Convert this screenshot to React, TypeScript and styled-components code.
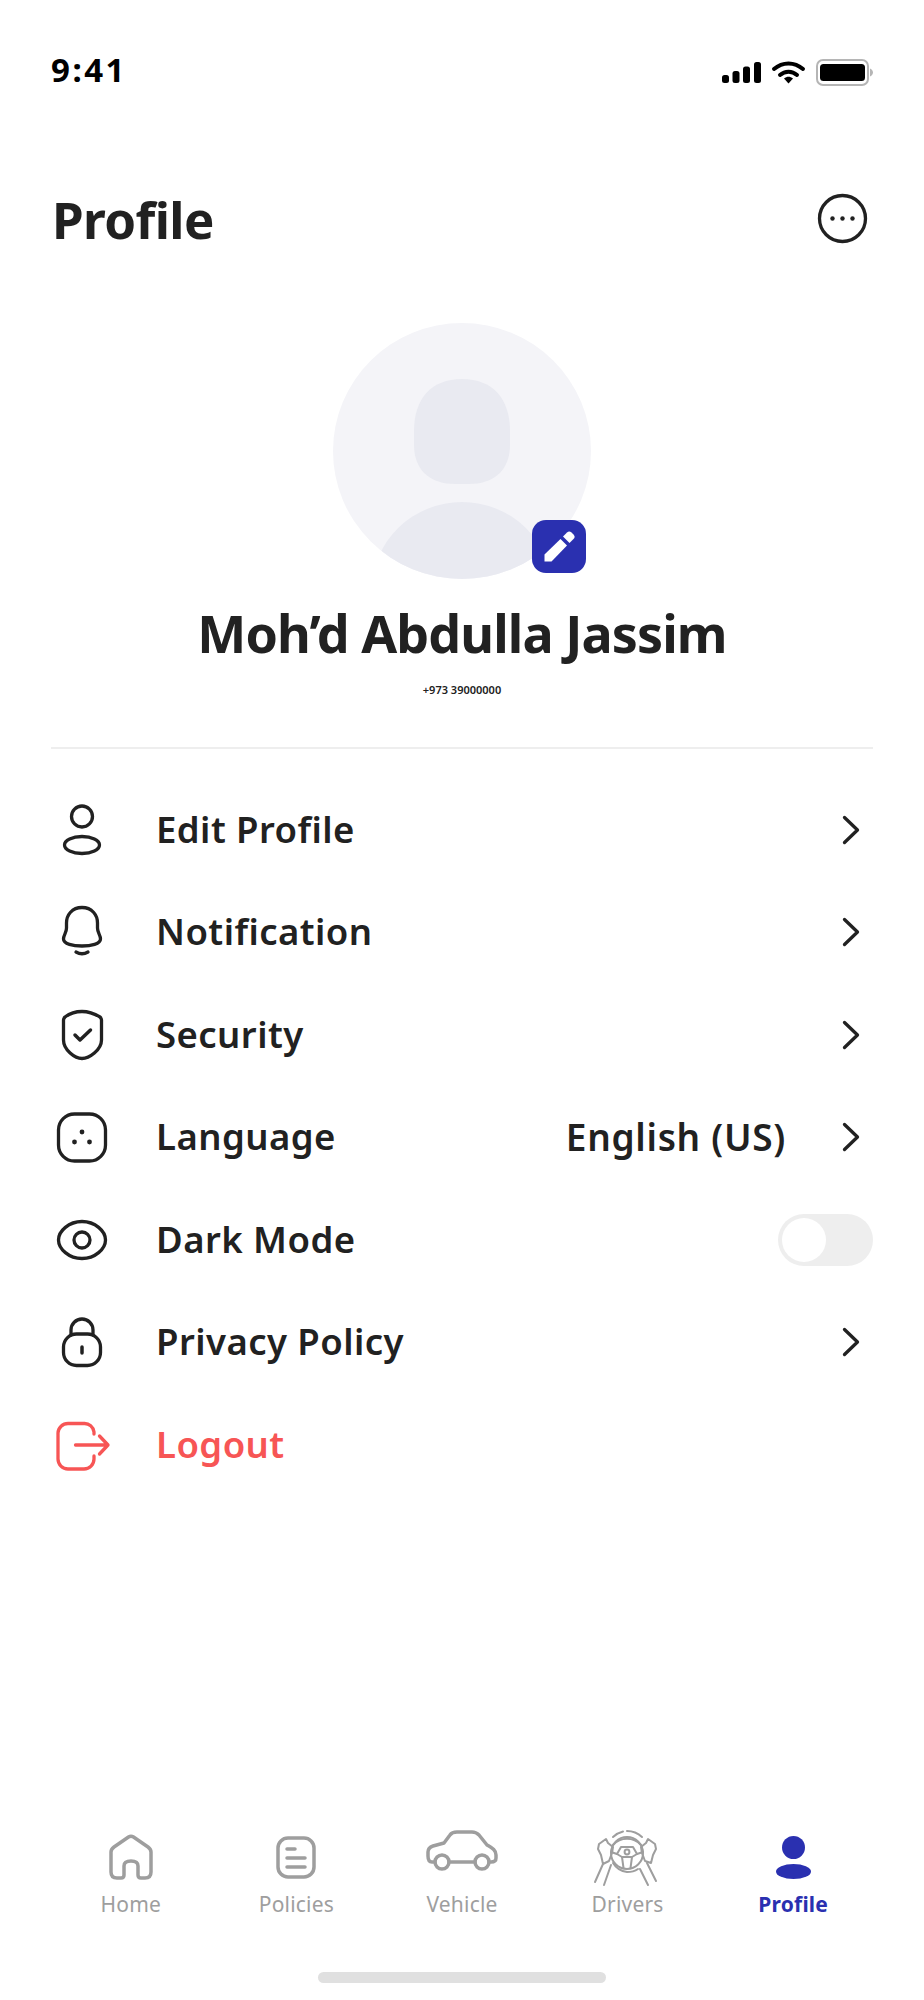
import React from 'react'
import styled, { createGlobalStyle } from 'styled-components'

const GlobalStyle = createGlobalStyle`
  html, body {
    margin: 0;
    padding: 0;
    background: #fff;
  }
  * {
    box-sizing: border-box;
  }
`

const INK = '#212121'
const BLUE = '#2a30b0'
const GREY = '#9e9e9e'
const RED = '#f75555'
const FONT = `'Noto Sans', 'Open Sans', sans-serif`

const Page = styled.div`
  width: 924px;
  height: 2000px;
  display: flex;
  flex-direction: column;
  background: #fff;
  font-family: ${FONT};
  color: ${INK};
  overflow: hidden;
`

const StatusBar = styled.div`
  height: 142px;
  padding: 0 51px;
  display: flex;
  align-items: center;
  justify-content: space-between;
`

const Time = styled.span`
  padding-bottom: 4px;
  font-size: 33px;
  font-weight: 700;
  letter-spacing: 2.5px;
  color: #000;
`

const StatusIcons = styled.div`
  margin-top: 2px;
  display: flex;
  align-items: center;
  gap: 11px;
`

const Header = styled.div`
  height: 153px;
  padding: 0 57px 0 52px;
  display: flex;
  align-items: center;
  justify-content: space-between;
`

const Title = styled.h1`
  margin: 0;
  font-size: 51px;
  font-weight: 700;
  letter-spacing: -0.6px;
`

const ProfileBlock = styled.div`
  padding-top: 28px;
  display: flex;
  flex-direction: column;
  align-items: center;
`

const AvatarWrap = styled.div`
  position: relative;
  width: 258px;
  height: 256px;
`

const EditBadge = styled.div`
  position: absolute;
  left: 199px;
  top: 197px;
  width: 54px;
  height: 53px;
  border-radius: 14px;
  background: ${BLUE};
  display: flex;
  align-items: center;
  justify-content: center;
`

const Name = styled.div`
  margin-top: 19px;
  font-size: 52px;
  line-height: 70px;
  font-weight: 700;
  letter-spacing: -0.9px;
  white-space: nowrap;
`

const Phone = styled.div`
  margin-top: 14px;
  font-size: 11px;
  line-height: 16px;
  font-weight: 600;
`

const Divider = styled.hr`
  margin: 49px 51px 0;
  border: 0;
  height: 2px;
  background: #eeeeee;
`

const Menu = styled.div`
  margin-top: 29.5px;
  padding: 0 51px;
  display: flex;
  flex-direction: column;
`

const Row = styled.div`
  height: 102.5px;
  display: flex;
  align-items: center;
`

const IconSlot = styled.div`
  width: 62px;
  margin-right: 43px;
  display: flex;
  justify-content: center;
  flex-shrink: 0;
`

const RowLabel = styled.span<{ $danger?: boolean }>`
  flex: 1;
  padding-bottom: 2px;
  font-size: 36.5px;
  font-weight: 600;
  letter-spacing: 0.45px;
  color: ${({ $danger }) => ($danger ? RED : INK)};
`

const RowValue = styled.span`
  padding-bottom: 2px;
  font-size: 37px;
  font-weight: 600;
  letter-spacing: 0.7px;
  margin-right: 43px;
`

const ChevronSlot = styled.div`
  width: 30px;
  margin-right: 14px;
  display: flex;
  justify-content: flex-end;
`

const Toggle = styled.div`
  width: 95px;
  height: 52px;
  border-radius: 26px;
  background: #eeeeee;
  padding: 4px;
  display: flex;
`

const Knob = styled.div`
  width: 44px;
  height: 44px;
  border-radius: 50%;
  background: #fff;
`

const Nav = styled.nav`
  margin-top: auto;
  padding: 0 48px;
  display: grid;
  grid-template-columns: repeat(5, 1fr);
`

const NavItem = styled.div`
  display: flex;
  flex-direction: column;
  align-items: center;
`

const NavIconBox = styled.div`
  height: 54px;
  display: flex;
  align-items: center;
  justify-content: center;
`

const NavLabel = styled.span<{ $active?: boolean }>`
  margin-top: 5px;
  font-size: 21px;
  line-height: 30px;
  letter-spacing: 0.2px;
  font-weight: ${({ $active }) => ($active ? 700 : 400)};
  color: ${({ $active }) => ($active ? BLUE : GREY)};
`

const HomeBar = styled.div`
  width: 288px;
  height: 11px;
  margin: 53px auto 17px;
  border-radius: 6px;
  background: #e0e0e0;
`

const Line = styled.svg.attrs({
  fill: 'none',
  strokeLinecap: 'round',
  strokeLinejoin: 'round',
})`
  display: block;
  overflow: visible;
  flex-shrink: 0;
`

const SignalIcon = () => (
  <svg width="39" height="21" viewBox="0 0 39 21" fill="#000">
    <rect x="0" y="13" width="7" height="8" rx="2.5" />
    <rect x="10.5" y="9" width="7" height="12" rx="2.5" />
    <rect x="21" y="4.5" width="7" height="16.5" rx="2.5" />
    <rect x="32" y="0" width="7" height="21" rx="2.5" />
  </svg>
)

const WifiIcon = () => (
  <Line width="33" height="23" viewBox="0 0 33 23">
    <path d="M2 8C10.5 0.5 22.5 0.5 31 8" stroke="#000" strokeWidth="4" />
    <path d="M8 14C13 9.5 20 9.5 25 14" stroke="#000" strokeWidth="4" />
    <path d="M12 17.5L16.5 22.5L21 17.5C18 15.2 15 15.2 12 17.5Z" fill="#000" />
  </Line>
)

const BatteryIcon = () => (
  <svg width="57" height="27" viewBox="0 0 57 27" fill="none">
    <rect x="1" y="1" width="51" height="25" rx="6" stroke="#b5b5b5" strokeWidth="2" />
    <rect x="4" y="5" width="45" height="17" rx="3.5" fill="#000" />
    <path d="M54 9.5C56 10.5 57 12 57 13.5C57 15 56 16.5 54 17.5Z" fill="#b5b5b5" />
  </svg>
)

const MoreIcon = () => (
  <Line width="49" height="49" viewBox="0 0 49 49">
    <circle cx="24.5" cy="24.5" r="23" stroke={INK} strokeWidth="3.3" />
    <circle cx="14.5" cy="24.5" r="2.2" fill={INK} />
    <circle cx="24.5" cy="24.5" r="2.2" fill={INK} />
    <circle cx="34.5" cy="24.5" r="2.2" fill={INK} />
  </Line>
)

const AvatarArt = () => (
  <svg width="258" height="256" viewBox="0 0 258 256">
    <defs>
      <clipPath id="avatar-clip">
        <ellipse cx="129" cy="128" rx="129" ry="128" />
      </clipPath>
    </defs>
    <ellipse cx="129" cy="128" rx="129" ry="128" fill="#f4f4f8" />
    <path
      d="M129 56C160 56 177 76 177 108V122C177 148 160 161 136 161H122C98 161 81 148 81 122V108C81 76 98 56 129 56Z"
      fill="#e9eaf1"
    />
    <g clipPath="url(#avatar-clip)">
      <ellipse cx="129" cy="267" rx="90" ry="88" fill="#e9eaf1" />
    </g>
  </svg>
)

const PencilIcon = () => (
  <svg width="31" height="31" viewBox="0 0 31 31" fill="#fff">
    <path d="M0.5 23.5V30.5H7.5L23 14.5L16.5 8Z" />
    <path d="M19 5.5L25.5 12L29.5 8C31 6.5 31 5 29.5 3.5L27.5 1.5C26 0 24.5 0 23 1.5Z" />
  </svg>
)

const stroke = { stroke: INK, strokeWidth: 3.3 }

const PersonIcon = () => (
  <Line width="50" height="50" viewBox="0 0 50 50" {...stroke}>
    <circle cx="25" cy="11.5" r="10.5" />
    <ellipse cx="25" cy="40" rx="17.5" ry="8.5" />
  </Line>
)

const BellIcon = () => (
  <Line width="50" height="50" viewBox="0 0 50 50" {...stroke}>
    <path d="M25 0.5C15 0.5 9.5 8 9.5 16V21C9.5 26 6.5 28 6.5 32C6.5 37 16 39 25 39C34 39 43.5 37 43.5 32C43.5 28 40.5 26 40.5 21V16C40.5 8 35 0.5 25 0.5Z" />
    <path d="M19 45Q25 48.5 31 45" />
  </Line>
)

const ShieldIcon = () => (
  <Line width="50" height="50" viewBox="0 0 50 50" {...stroke}>
    <path d="M25 1.5C32 1.5 38 4 43 7C44 8 44.5 9 44.5 10V30C44.5 40 32 48.5 25 48.5C18 48.5 6.5 40 6.5 30V10C6.5 9 7 8 8 7C12 4 18 1.5 25 1.5Z" />
    <path d="M18 25L23 30L33.5 20" strokeWidth="3.5" />
  </Line>
)

const LanguageIcon = () => (
  <Line width="50" height="50" viewBox="0 0 50 50" {...stroke}>
    <rect x="1.5" y="2" width="47" height="47" rx="16" />
    <circle cx="25" cy="20" r="2.4" fill={INK} stroke="none" />
    <circle cx="17.5" cy="30" r="2.4" fill={INK} stroke="none" />
    <circle cx="32.5" cy="30" r="2.4" fill={INK} stroke="none" />
  </Line>
)

const EyeIcon = () => (
  <Line width="50" height="50" viewBox="0 0 50 50" {...stroke}>
    <path d="M1.5 25C1.5 16 12 6.5 25 6.5C38 6.5 48.5 16 48.5 25C48.5 34 38 43.5 25 43.5C12 43.5 1.5 34 1.5 25Z" />
    <circle cx="25" cy="25" r="8" />
  </Line>
)

const LockIcon = () => (
  <Line width="50" height="50" viewBox="0 0 50 50" {...stroke}>
    <rect x="6.5" y="17" width="37" height="31.5" rx="13" />
    <path d="M14 18V13A11 11 0 0 1 36 13V18" />
    <path d="M25 30V36" strokeWidth="3.5" />
  </Line>
)

const LogoutIcon = () => (
  <Line width="50" height="50" viewBox="0 0 50 50" stroke={RED} strokeWidth="3.3">
    <path d="M37 14V12A9.5 9.5 0 0 0 27 3.5H11A10 10 0 0 0 1 13V39A10 10 0 0 0 11 49H27A10 10 0 0 0 37 39V36" />
    <path d="M18.5 25H51M42.5 16L51 25L42.5 34" />
  </Line>
)

const ChevronIcon = () => (
  <Line width="16" height="28" viewBox="0 0 16 28" stroke={INK} strokeWidth="3.3">
    <path d="M1.5 1.5L14.5 14L1.5 26.5" />
  </Line>
)

const navStroke = { stroke: GREY, strokeWidth: 3.5 }

const NavHomeIcon = () => (
  <Line width="44" height="46" viewBox="0 0 44 46" {...navStroke}>
    <path d="M19.5 3L5 13C3 14.5 2 16 2 18V38C2 42 4 44 8 44H12C14 44 15 43 15 41V32C15 29 17 27 22 27C27 27 29 29 29 32V41C29 43 30 44 32 44H36C40 44 42 42 42 38V18C42 16 41 14.5 39 13L24.5 3C23 2 21 2 19.5 3Z" />
  </Line>
)

const NavPoliciesIcon = () => (
  <Line width="40" height="43" viewBox="0 0 40 43" {...navStroke}>
    <rect x="2" y="2" width="36" height="39" rx="10" />
    <path d="M11 13H19M11 22H29M11 31H29" />
  </Line>
)

const NavVehicleIcon = () => (
  <Line width="72" height="54" viewBox="0 0 72 54" {...navStroke}>
    <circle cx="16" cy="32" r="7" />
    <circle cx="56" cy="32" r="7" />
    <path d="M9 32H6C3 32 2 29 2 26V22C2 19 4 17 7 16L18 13L24 5C26 2 28 2 31 2H46C49 2 51 3 53 5L61 15C66 18 70 20 70 25V28C70 31 68 32 65 32H63M23 32H49" />
  </Line>
)

const NavDriversIcon = () => (
  <Line width="67" height="54" viewBox="0 0 67 54" stroke={GREY} strokeWidth="2">
    <path d="M19 7A22 22 0 0 1 29 1.5M33 1A22 22 0 0 1 48 7" />
    <path d="M19 15A19 19 0 0 1 47 15" />
    <path d="M19 33A19 19 0 0 0 33 42C37 42 41 41 44 39" />
    <path d="M17 23A16 16 0 0 0 49 23A16 16 0 0 0 17 23" />
    <path d="M27 17H39L43 24L38 27H28L23 24Z" />
    <circle cx="33" cy="22" r="2.4" />
    <path d="M17 22L23 24M43 24L49 22M28 27L29.5 38M38 27L36.5 38" />
    <path d="M5 14L12 9L14 13L19 17L18 23L15 31L9 34L7 25L4 19Z" />
    <path d="M61 14L54 9L52 13L47 17L48 23L51 31L57 33L59 25L62 19Z" />
    <path d="M9 34L1 52M17 35L10 55M53 33L62 51M46 39L54 55" />
  </Line>
)

const NavProfileIcon = () => (
  <svg width="35" height="43" viewBox="0 0 35 43" fill={BLUE}>
    <circle cx="17.5" cy="11.5" r="11.5" />
    <ellipse cx="17.5" cy="35.5" rx="17.5" ry="7.5" />
  </svg>
)

const menuItems = [
  { label: 'Edit Profile', icon: <PersonIcon /> },
  { label: 'Notification', icon: <BellIcon /> },
  { label: 'Security', icon: <ShieldIcon /> },
  { label: 'Language', icon: <LanguageIcon />, value: 'English (US)' },
  { label: 'Dark Mode', icon: <EyeIcon />, toggle: true },
  { label: 'Privacy Policy', icon: <LockIcon /> },
  { label: 'Logout', icon: <LogoutIcon />, danger: true },
]

const navItems = [
  { label: 'Home', icon: <NavHomeIcon /> },
  { label: 'Policies', icon: <NavPoliciesIcon /> },
  { label: 'Vehicle', icon: <NavVehicleIcon /> },
  { label: 'Drivers', icon: <NavDriversIcon /> },
  { label: 'Profile', icon: <NavProfileIcon />, active: true },
]

const App = () => (
  <Page>
    <GlobalStyle />
    <StatusBar>
      <Time>9:41</Time>
      <StatusIcons>
        <SignalIcon />
        <WifiIcon />
        <BatteryIcon />
      </StatusIcons>
    </StatusBar>
    <Header>
      <Title>Profile</Title>
      <MoreIcon />
    </Header>
    <ProfileBlock>
      <AvatarWrap>
        <AvatarArt />
        <EditBadge>
          <PencilIcon />
        </EditBadge>
      </AvatarWrap>
      <Name>Moh’d Abdulla Jassim</Name>
      <Phone>+973 39000000</Phone>
    </ProfileBlock>
    <Divider />
    <Menu>
      {menuItems.map(item => (
        <Row key={item.label}>
          <IconSlot>{item.icon}</IconSlot>
          <RowLabel $danger={item.danger}>{item.label}</RowLabel>
          {item.value && <RowValue>{item.value}</RowValue>}
          {item.toggle ? (
            <Toggle>
              <Knob />
            </Toggle>
          ) : (
            !item.danger && (
              <ChevronSlot>
                <ChevronIcon />
              </ChevronSlot>
            )
          )}
        </Row>
      ))}
    </Menu>
    <Nav>
      {navItems.map(item => (
        <NavItem key={item.label}>
          <NavIconBox>{item.icon}</NavIconBox>
          <NavLabel $active={item.active}>{item.label}</NavLabel>
        </NavItem>
      ))}
    </Nav>
    <HomeBar />
  </Page>
)

export default App
